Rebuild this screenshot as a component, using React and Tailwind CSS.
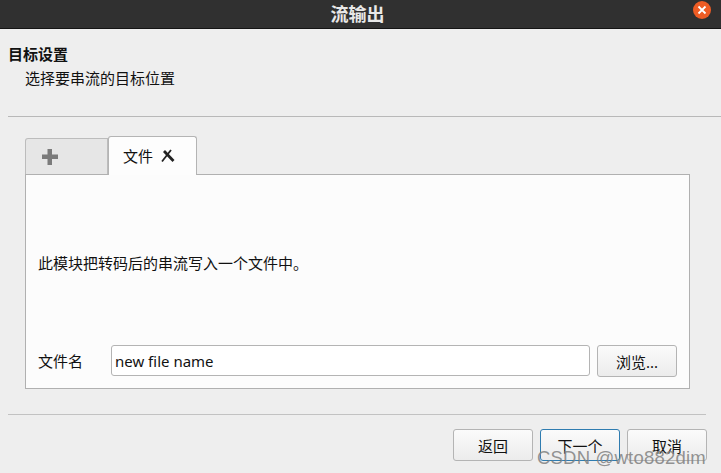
import React from "react";

const font = { fontFamily: '"Noto Sans", "Noto Sans CJK SC", sans-serif' };

const Button = ({ children, focused = false, className = "" }) => (
  <button
    className={`h-[32px] w-[80px] rounded-[3px] border pt-[3px] text-[15px] leading-none text-[#111] bg-gradient-to-b from-[#fbfbfb] to-[#ececec] ${
      focused ? "border-[#2f7cb0]" : "border-[#b4b4b4]"
    } ${className}`}
  >
    {children}
  </button>
);

export default function App() {
  return (
    <div
      className="relative flex h-[473px] w-[721px] flex-col overflow-hidden bg-[#eeeeee] text-[#111]"
      style={font}
    >
      {/* title bar */}
      <div className="relative flex h-[29px] shrink-0 items-center justify-center border-b border-[#141414] bg-[#303030] pr-[6px]">
        <span className="text-[18px] font-bold leading-none text-[#e8e8e8]">流输出</span>
        <div className="absolute right-[10px] top-[1px] flex h-[18px] w-[18px] items-center justify-center rounded-full bg-[#ee5c24]">
          <svg width="10" height="10" viewBox="0 0 10 10">
            <path d="M1.5 1.5 L8.5 8.5 M8.5 1.5 L1.5 8.5" stroke="#fff" strokeWidth="1.8" />
          </svg>
        </div>
      </div>

      {/* header text */}
      <div className="flex flex-col pl-[8px] pt-[15px]">
        <h1 className="text-[15px] font-bold leading-[20px]">目标设置</h1>
        <p className="mt-[4px] pl-[17px] text-[15px] leading-[20px]">选择要串流的目标位置</p>
      </div>

      <div className="ml-[8px] mt-[28px] h-px bg-[#b8b8b8]" />

      {/* tabs */}
      <div className="ml-[25px] mt-[19px] flex w-[665px] items-end">
        <div className="flex h-[36px] w-[83px] items-center rounded-tl-[3px] border border-b-0 border-[#bcbcbc] bg-[#e6e6e6] pl-[15px]">
          <svg width="18" height="18" viewBox="0 0 18 18">
            <path d="M6.5 1 H11 V6.5 H17 V11 H11 V17 H6.5 V11 H1 V6.5 H6.5 Z" fill="#7b7b7b" />
          </svg>
        </div>
        <div className="relative z-10 -mb-px flex h-[39px] w-[89px] items-center gap-[8px] rounded-t-[3px] border border-b-0 border-[#b4b4b4] bg-[#fdfdfd] pl-[14px]">
          <span className="text-[15px] leading-none">文件</span>
          <svg width="14" height="14" viewBox="0 0 14 14">
            <path d="M10 1 L1 12.5" stroke="#222" strokeWidth="1.8" />
            <path d="M3 2 L12.5 12" stroke="#222" strokeWidth="2.8" />
          </svg>
        </div>
      </div>

      {/* tab panel */}
      <div className="ml-[25px] flex h-[215px] w-[665px] flex-col border border-[#b0b0b0] bg-[#fcfcfc] px-[12px]">
        <p className="mt-[78px] text-[15px] leading-[20px]">此模块把转码后的串流写入一个文件中。</p>
        <div className="mt-[71px] flex items-start pt-[1px]">
          <span className="w-[73px] pt-[9px] text-[15px] leading-none">文件名</span>
          <div className="flex h-[31px] w-[479px] items-center rounded-[3px] border border-[#b4b4b4] bg-white pl-[3px] pt-[1px] text-[15px]">
            new file name
          </div>
          <Button className="ml-[7px]">浏览...</Button>
        </div>
      </div>

      <div className="ml-[8px] mt-[25px] h-px w-[698px] bg-[#c2c2c2]" />

      {/* footer buttons */}
      <div className="ml-[453px] mt-[14px] flex gap-[7px]">
        <Button>返回</Button>
        <Button focused>下一个</Button>
        <Button>取消</Button>
      </div>

      {/* watermark */}
      <span className="absolute left-[537px] top-[446px] text-[18.5px] leading-[24px] tracking-[0.2px] text-[#808080]/85 [font-family:'Liberation_Sans',sans-serif]">
        CSDN @wto882dim
      </span>
    </div>
  );
}
